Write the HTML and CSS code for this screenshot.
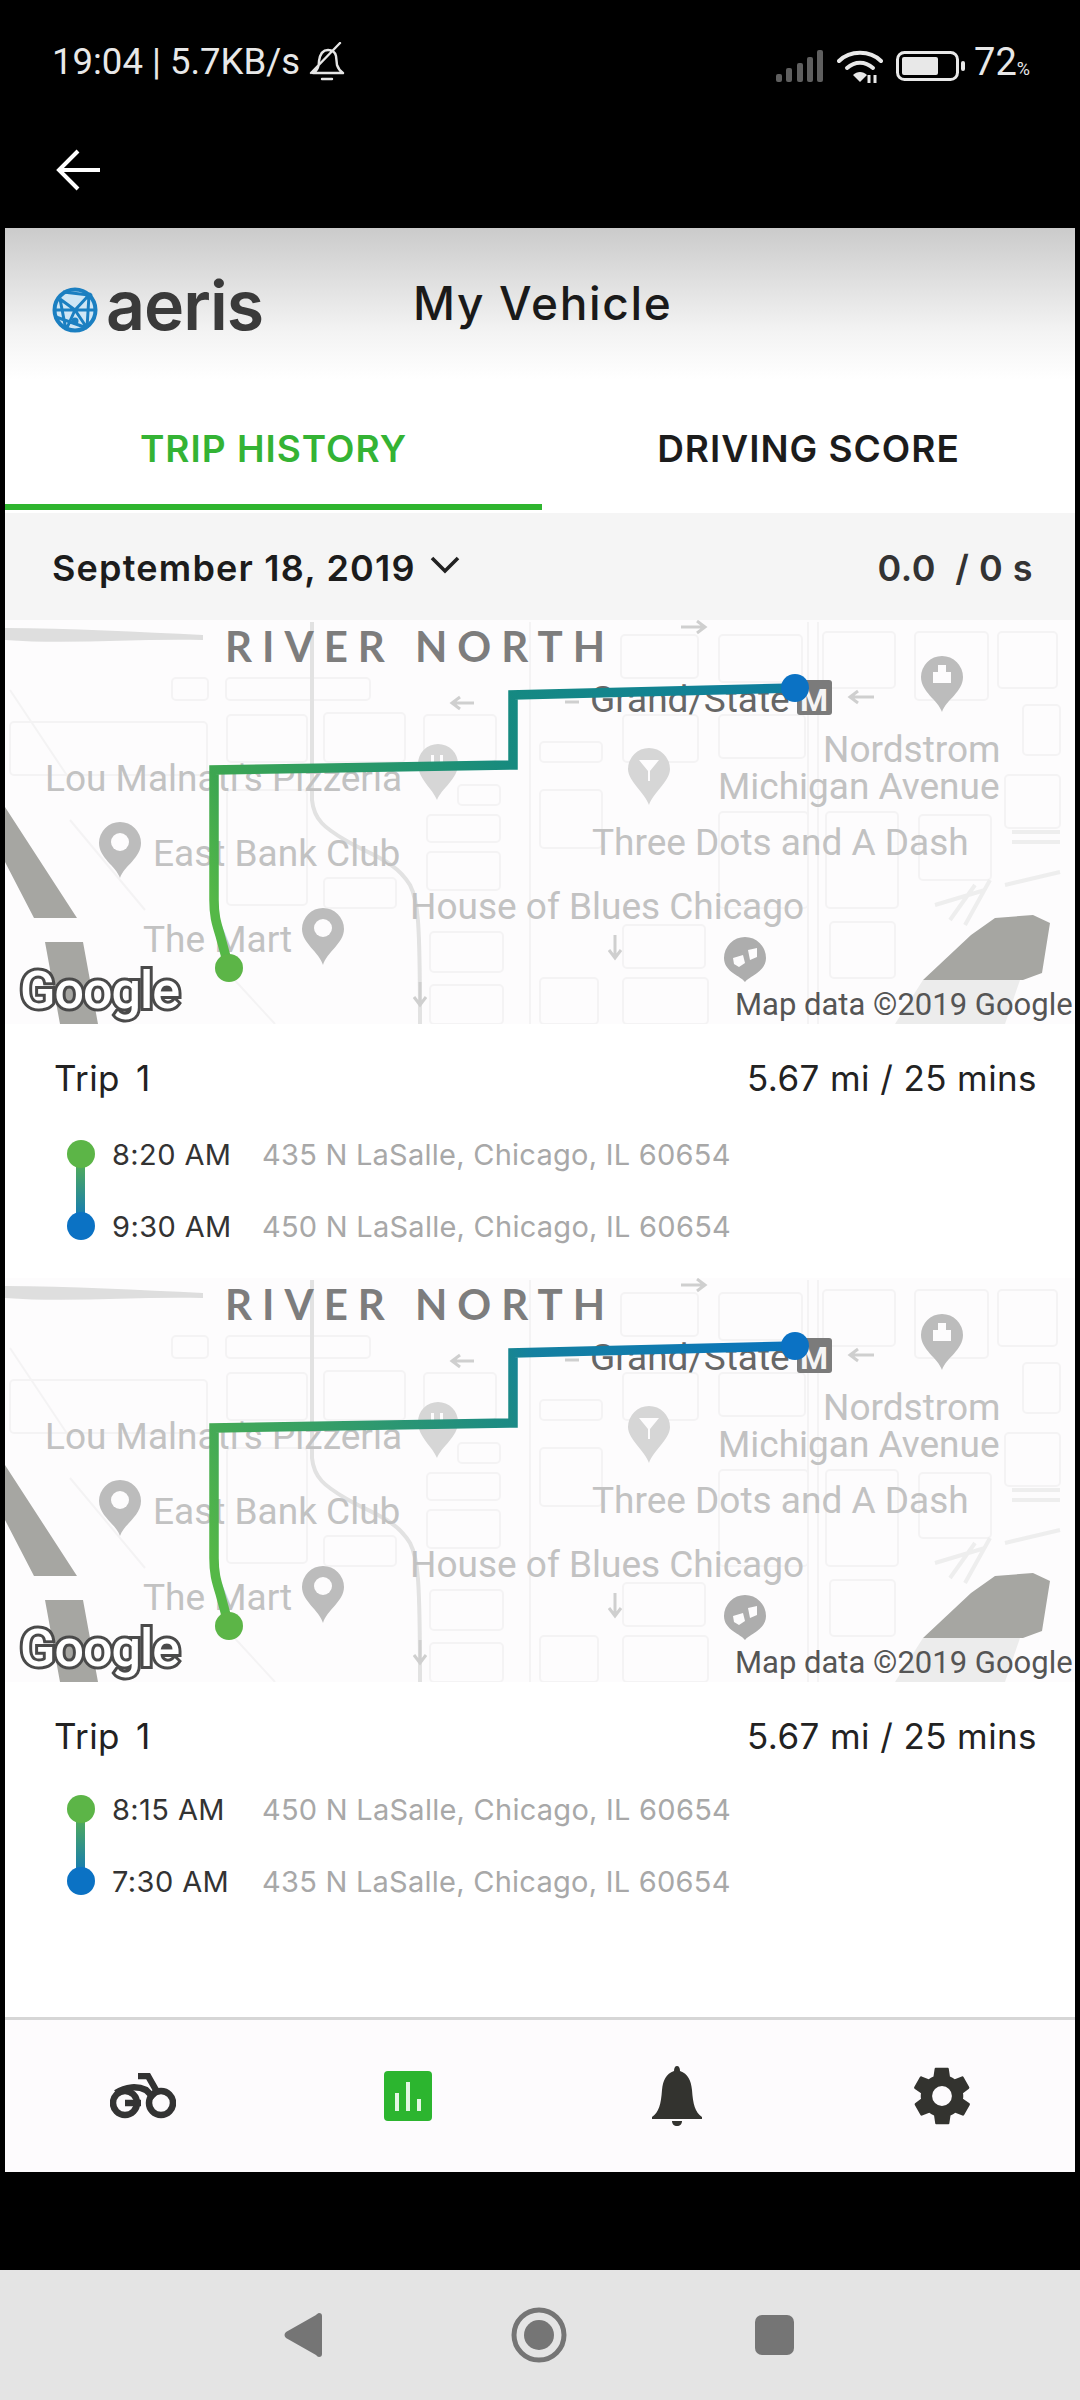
FILE: index.html
```html
<!DOCTYPE html>
<html lang="en">
<head>
<meta charset="utf-8">
<title>My Vehicle</title>
<link rel="stylesheet" href="styles.css">
</head>
<body>
<div class="screen">
  <div class="status">
    <div class="status-left">
      <span>19:04 | 5.7KB/s</span>
      <svg class="mute" viewBox="0 0 36 40"><path d="M6 30C9 27 10 24 10 19 11 12 14 8 19 8c4 0 7 2 8 6l1 9c1 3 3 6 6 8H4M2 31L31 1M13 37h10" fill="none" stroke="#e6e6e6" stroke-width="2.4" stroke-linecap="round" stroke-linejoin="round"/></svg>
    </div>
    <div class="status-right">
      <svg class="signal" viewBox="0 0 48 32"><g fill="#5f5f5f"><rect x="0" y="24" width="6" height="8" rx="2"/><rect x="10" y="18" width="6" height="14" rx="2"/><rect x="21" y="13" width="6" height="19" rx="2"/><rect x="31" y="7" width="6" height="25" rx="2"/><rect x="41" y="0" width="6" height="32" rx="2"/></g></svg>
      <svg class="wifi" viewBox="0 0 46 34"><g fill="none" stroke="#e8e8e8" stroke-width="4" stroke-linecap="round"><path d="M2 12C13 1 33 1 44 12"/><path d="M10 19c8-7 18-7 26 0"/></g><path d="M16 26c4-4 10-4 14 0l-7 7z" fill="#e8e8e8"/><path d="M32 26v8M38 26v8" stroke="#e8e8e8" stroke-width="3"/></svg>
      <svg class="battery" viewBox="0 0 70 30"><rect x="1.500" y="1.500" width="60" height="27" rx="7" fill="none" stroke="#e8e8e8" stroke-width="3"/><rect x="6" y="6" width="36" height="18" rx="2" fill="#e8e8e8"/><rect x="65" y="10" width="4" height="10" rx="2" fill="#e8e8e8"/></svg>
      <span class="pct">72<small>%</small></span>
    </div>
  </div>
  <div class="toolbar">
    <svg class="back" viewBox="0 0 44 44"><path d="M2 22h42M22 3L3 22l19 19" fill="none" stroke="#fff" stroke-width="4" stroke-linejoin="miter"/></svg>
  </div>

  <main class="app">
    <header class="app-header">
      <div class="logo">
        <svg class="globe" viewBox="0 0 46 46"><circle cx="23" cy="23" r="20.500" fill="#cfe6f5" stroke="#1b7fc1" stroke-width="4"/><g fill="none" stroke="#1b7fc1" stroke-width="3"><path d="M4 23h38M8 12l15 11 14-15M23 23l-9 20M23 23l12 18M8 12l6 31M37 8l-2 33M11 5l26 3M4 30l31 11"/></g><circle cx="23" cy="34" r="3.500" fill="#1b7fc1"/><circle cx="37" cy="9" r="3.500" fill="#1b7fc1"/></svg>
        <span class="logo-text">aeris</span>
      </div>
      <h1 class="title">My Vehicle</h1>
    </header>

    <nav class="tabs">
      <div class="tab tab-active">TRIP HISTORY</div>
      <div class="tab">DRIVING SCORE</div>
    </nav>

    <div class="date-bar">
      <div class="date">
        <span>September 18, 2019</span>
        <svg class="chev" viewBox="0 0 30 18"><path d="M2 2l13 13L28 2" fill="none" stroke="#222" stroke-width="3.600"/></svg>
      </div>
      <div class="score">0.0&nbsp; / 0 s</div>
    </div>

    <section class="trip">
      <svg class="map" viewBox="5 620 1070 404">
        <defs>
          <linearGradient id="route1" gradientUnits="userSpaceOnUse" x1="212" y1="900" x2="795" y2="688"><stop offset="0" stop-color="#55b847"/><stop offset="0.07" stop-color="#3da651"/><stop offset="0.53" stop-color="#168a7f"/><stop offset="1" stop-color="#0e7da0"/></linearGradient>
          <linearGradient id="route2" gradientUnits="userSpaceOnUse" x1="212" y1="900" x2="795" y2="688"><stop offset="0" stop-color="#55b847"/><stop offset="0.07" stop-color="#45aa55"/><stop offset="0.53" stop-color="#1b8a85"/><stop offset="0.6" stop-color="#1480a0"/><stop offset="1" stop-color="#0b74bd"/></linearGradient>
          <g id="base">
            <g class="block">
              <rect x="172" y="678" width="36" height="22" rx="4"/><rect x="226" y="678" width="144" height="22" rx="4"/><rect x="227" y="715" width="80" height="47" rx="4"/><rect x="324" y="713" width="81" height="49" rx="4"/><rect x="424" y="715" width="72" height="47" rx="4"/><rect x="10" y="722" width="197" height="53" rx="4"/><rect x="458" y="785" width="42" height="20" rx="4"/><rect x="427" y="815" width="73" height="27" rx="4"/><rect x="427" y="852" width="73" height="38" rx="4"/><rect x="227" y="790" width="80" height="115" rx="4"/><rect x="324" y="878" width="72" height="30" rx="4"/><rect x="430" y="932" width="73" height="40" rx="4"/><rect x="430" y="985" width="73" height="39" rx="4"/>
              <rect x="823" y="632" width="72" height="56" rx="4"/><rect x="915" y="632" width="73" height="68" rx="4"/><rect x="998" y="632" width="59" height="56" rx="4"/><rect x="719" y="635" width="83" height="47" rx="4"/><rect x="621" y="635" width="77" height="43" rx="4"/><rect x="719" y="715" width="86" height="43" rx="4"/><rect x="540" y="742" width="62" height="20" rx="4"/><rect x="540" y="790" width="62" height="58" rx="4"/><rect x="623" y="715" width="75" height="47" rx="4"/><rect x="826" y="812" width="72" height="96" rx="4"/><rect x="719" y="812" width="89" height="96" rx="4"/><rect x="919" y="815" width="72" height="65" rx="4"/><rect x="1005" y="775" width="55" height="53" rx="4"/><rect x="1023" y="705" width="37" height="50" rx="4"/><rect x="623" y="925" width="82" height="43" rx="4"/><rect x="623" y="978" width="85" height="46" rx="4"/><rect x="540" y="978" width="58" height="46" rx="4"/><rect x="830" y="922" width="65" height="56" rx="4"/>
            </g>
            <path class="block" d="M808 622V1024M818 622V1024M10 690L70 780M70 820L145 910M230 975L275 1024M530 622V1024"/>
            <path class="road-mid" d="M312 622V800C314 820 325 828 345 840C370 855 395 860 410 885C418 900 420 920 420 1024"/>
            <path class="road-top" d="M5 628C70 628 140 632 203 635L203 640C140 638 70 645 5 640z"/>
            <path class="road-light" d="M1012 832H1060M1012 842H1060M1005 885L1060 872M950 920L975 885M935 905L985 890M965 925L990 880"/>
            <path class="fade" d="M895 1024L923 980H1020L1005 1024z"/>
            <path class="water" d="M5 807L77 918H34L5 862zM45 942H83L98 1024H60zM923 980L971 935L995 918L1033 915L1050 923L1042 973L1023 980z"/>
            <g class="arrow"><path d="M452 703h22M460 697l-8 6 8 6M850 697h24M858 691l-8 6 8 6M681 627h24M697 621l8 6-8 6M565 702h14M420 982v23M414 997l6 8 6-8M615 935v23M609 950l6 8 6-8"/></g>
            <g class="pin pin-soft"><path d="M437 800c-4-11-19-21-19-36a20 20 0 0 1 40 0c0 15-17 25-21 36z"/><path class="pin-in" d="M431 755h3v14h-3zM440 755h3v14h-3z"/></g>
            <g class="pin pin-soft"><path d="M649 805c-4-12-21-24-21-36a21 21 0 0 1 42 0c0 12-17 24-21 36z"/><path class="pin-in" d="M639 760h20l-9 11v10h-2v-10z"/></g>
            <g class="pin"><path d="M942 712c-4-12-21-20-21-35a21 21 0 0 1 42 0c0 15-17 23-21 35z"/><path class="pin-in" d="M933 672h18v11h-18zM938 665h8v8h-8z"/></g>
            <g class="pin"><path d="M120 878c-4-12-21-20-21-35a21 21 0 0 1 42 0c0 15-17 23-21 35z"/><circle class="pin-in" cx="120" cy="842" r="9"/></g>
            <g class="pin"><path d="M323 965c-4-13-21-22-21-36a21 21 0 0 1 42 0c0 14-17 23-21 36z"/><circle class="pin-in" cx="323" cy="928" r="9"/></g>
            <g class="pin pin-dark"><path d="M745 982c-4-6-21-10-21-24a21 21 0 0 1 42 0c0 14-17 18-21 24z"/><path class="pin-in" d="M733 958l10-3 2 8-6 4-5-3zM748 950l9-2v9l-7 3z"/></g>
          </g>
        </defs>
        <use href="#base"/>
        <text class="m-area" x="225" y="662">RIVER NORTH</text>
        <text class="m-dark" x="590" y="712">Grand/State</text>
        <rect class="m-badge" x="797" y="680" width="35" height="35" rx="3"/>
        <text class="m-badge-t" x="814" y="711" text-anchor="middle">M</text>
        <text class="m-label"><tspan x="823" y="762">Nordstrom</tspan><tspan x="718" y="799">Michigan Avenue</tspan></text>
        <text class="m-label" x="45" y="791">Lou Malnati's Pizzeria</text>
        <text class="m-label" x="153" y="866">East Bank Club</text>
        <text class="m-label" x="592" y="855">Three Dots and A Dash</text>
        <text class="m-label" x="410" y="919">House of Blues Chicago</text>
        <text class="m-label" x="143" y="952">The Mart</text>
        <path class="route r-one" d="M229 968L220 935C216 922 214 915 214 900V770L513 765V695L795 688"/>
        <circle class="dot-g" cx="229" cy="968" r="14"/>
        <circle class="dot-b" cx="795" cy="688" r="14"/>
        <text class="m-google" x="20" y="1008">Google</text>
        <text class="m-credit" x="735" y="1015">Map data ©2019 Google</text>
      </svg>
      <div class="trip-info">
        <div class="trip-head"><span class="trip-name">Trip 1</span><span>5.67 mi / 25 mins</span></div>
        <div class="legs">
          <div class="rail"></div>
          <div class="leg"><span class="time">8:20 AM</span><span class="addr">435 N LaSalle, Chicago, IL 60654</span></div>
          <div class="leg"><span class="time">9:30 AM</span><span class="addr">450 N LaSalle, Chicago, IL 60654</span></div>
        </div>
      </div>
    </section>

    <section class="trip trip-second">
      <svg class="map" viewBox="5 620 1070 404">
        <use href="#base"/>
        <text class="m-area" x="225" y="662">RIVER NORTH</text>
        <text class="m-dark" x="590" y="712">Grand/State</text>
        <rect class="m-badge" x="797" y="680" width="35" height="35" rx="3"/>
        <text class="m-badge-t" x="814" y="711" text-anchor="middle">M</text>
        <text class="m-label"><tspan x="823" y="762">Nordstrom</tspan><tspan x="718" y="799">Michigan Avenue</tspan></text>
        <text class="m-label" x="45" y="791">Lou Malnati's Pizzeria</text>
        <text class="m-label" x="153" y="866">East Bank Club</text>
        <text class="m-label" x="592" y="855">Three Dots and A Dash</text>
        <text class="m-label" x="410" y="919">House of Blues Chicago</text>
        <text class="m-label" x="143" y="952">The Mart</text>
        <path class="route r-two" d="M229 968L220 935C216 922 214 915 214 900V770L513 765V695L795 688"/>
        <circle class="dot-g" cx="229" cy="968" r="14"/>
        <circle class="dot-b" cx="795" cy="688" r="14"/>
        <text class="m-google" x="20" y="1008">Google</text>
        <text class="m-credit" x="735" y="1015">Map data ©2019 Google</text>
      </svg>
      <div class="trip-info">
        <div class="trip-head"><span class="trip-name">Trip 1</span><span>5.67 mi / 25 mins</span></div>
        <div class="legs">
          <div class="rail"></div>
          <div class="leg"><span class="time">8:15 AM</span><span class="addr">450 N LaSalle, Chicago, IL 60654</span></div>
          <div class="leg"><span class="time">7:30 AM</span><span class="addr">435 N LaSalle, Chicago, IL 60654</span></div>
        </div>
      </div>
    </section>

    <nav class="bottom-nav">
      <div class="nav-item nav-item-left">
        <svg class="ico-bike" viewBox="0 0 66 46"><g fill="none" stroke="#333" stroke-width="6.500"><circle cx="15" cy="30" r="12"/><circle cx="51" cy="30" r="12"/><path d="M15 30h16M6 20c10-7 22-7 30-3l8 8M28 3h10l8 14"/></g></svg>
      </div>
      <div class="nav-item nav-item-left">
        <svg class="ico-chart" viewBox="0 0 48 50"><rect width="48" height="50" rx="4" fill="#2cb52f"/><g fill="#e4f7e4"><rect x="11" y="22" width="4" height="18"/><rect x="22" y="11" width="4" height="29"/><rect x="33" y="28" width="4" height="12"/></g></svg>
      </div>
      <div class="nav-item">
        <svg class="ico-bell" viewBox="0 0 52 60"><path d="M26 0c2 0 3 2 3 5 8 3 11 9 12 19 1 14 3 22 10 27v2H1v-2c7-5 9-13 10-27 1-10 4-16 12-19 0-3 1-5 3-5z" fill="#33332f"/><path d="M21 55h10c0 3-2 5-5 5s-5-2-5-5z" fill="#33332f"/></svg>
      </div>
      <div class="nav-item">
        <svg class="ico-gear" viewBox="0 0 24 24"><path d="M19.400 13c.1-.3.1-.6.1-1s0-.7-.1-1l2.100-1.600c.2-.2.2-.4.1-.6l-2-3.500c-.1-.2-.4-.3-.6-.2l-2.500 1c-.5-.4-1.100-.7-1.700-1l-.4-2.700c0-.2-.2-.4-.5-.4h-4c-.3 0-.5.2-.5.4l-.4 2.700c-.6.3-1.200.6-1.700 1l-2.500-1c-.2-.1-.5 0-.6.2l-2 3.500c-.1.2-.1.4.1.6L4.600 11c-.1.3-.1.700-.1 1s0 .7.1 1l-2.100 1.600c-.2.2-.2.4-.1.6l2 3.500c.1.2.4.3.6.2l2.500-1c.5.4 1.100.7 1.700 1l.4 2.700c0 .2.2.4.5.4h4c.3 0 .5-.2.5-.4l.4-2.700c.6-.3 1.200-.6 1.700-1l2.500 1c.2.1.5 0 .6-.2l2-3.500c.1-.2.1-.4-.1-.6L19.400 13zM12 15.500a3.500 3.500 0 1 1 0-7 3.500 3.500 0 0 1 0 7z" fill="#33332f"/></svg>
      </div>
    </nav>
  </main>

  <footer class="sysnav">
    <svg class="sys-back" viewBox="0 0 38 46"><path d="M35 1c2 0 3 1 3 3v38c0 2-1 3-3 3-1 0-2-1-3-2L2 26c-2-2-2-4 0-6L32 3c1-1 2-2 3-2z" fill="#757575"/></svg>
    <svg class="sys-home" viewBox="0 0 56 56"><circle cx="28" cy="28" r="25" fill="none" stroke="#757575" stroke-width="5"/><circle cx="28" cy="28" r="15" fill="#757575"/></svg>
    <div class="sys-recent"></div>
  </footer>
</div>
</body>
</html>
```
FILE: styles.css
```css
* { box-sizing: border-box; }
html, body { margin: 0; padding: 0; background: #000; }
.screen { width: 1080px; height: 2400px; display: flex; flex-direction: column; background: #000; font-family: "Inter", "Lato", sans-serif; overflow: hidden; }

.status { height: 122px; padding: 42px 50px 0 52px; display: flex; justify-content: space-between; align-items: flex-start; color: #e8e8e8; font-family: "Roboto", sans-serif; font-size: 36.500px; line-height: 40px; }
.status-left { display: flex; align-items: center; gap: 9px; }
.mute { width: 36px; height: 40px; }
.status-right { display: flex; align-items: center; gap: 13px; }
.signal { width: 48px; height: 32px; }
.wifi { width: 46px; height: 34px; }
.battery { width: 70px; height: 30px; margin-right: -5px; }
.pct { font-size: 38px; }
.pct small { font-size: 18px; }
.toolbar { height: 106px; padding: 26px 0 0 56px; }
.back { display: block; width: 44px; height: 44px; }

.app { margin: 0 5px; height: 1944px; background: #fff; display: flex; flex-direction: column; color: #1c1c1c; }
.app-header { height: 152px; flex: none; display: flex; align-items: flex-start; padding: 42px 0 0 47px; background: linear-gradient(#cbcbcb, #f3f3f3 68%, #fff); }
.logo { display: flex; align-items: center; gap: 8px; width: 361px; height: 70px; }
.globe { width: 46px; height: 46px; margin-top: 10px; }
.logo-text { font-size: 68px; font-weight: 600; line-height: 70px; color: #3a3a3a; letter-spacing: -1px; }
.title { margin: 0; font-size: 46px; line-height: 66px; font-weight: 500; letter-spacing: 1.700px; color: #1a1a1a; }

.tabs { height: 133px; flex: none; display: flex; }
.tab { flex: 1; display: flex; align-items: center; justify-content: center; font-size: 37px; font-weight: 600; letter-spacing: 1px; color: #1c1c1c; padding-top: 6px; border-bottom: 3px solid transparent; }
.tab-active { flex: 0 0 537px; color: #34b334; box-shadow: inset 0 -6px 0 #2fb52f; }

.date-bar { height: 107px; flex: none; background: #f5f5f5; display: flex; align-items: center; justify-content: space-between; padding: 2px 42px 0 47px; font-size: 36px; font-weight: 600; letter-spacing: 1.200px; }
.date { display: flex; align-items: center; gap: 14px; }
.chev { width: 30px; height: 18px; margin-bottom: 6px; }
.score { color: #333; letter-spacing: .5px; }

.trip { height: 658px; flex: none; }
.map { display: block; width: 1070px; height: 404px; background: #fdfcfd; }
.trip-info { height: 254px; padding: 0 38px 0 49px; }
.trip-head { display: flex; justify-content: space-between; height: 108px; padding-top: 32px; font-size: 35px; letter-spacing: .4px; line-height: 44px; color: #222; }
.trip-second .trip-head { height: 105px; }
.trip-name { word-spacing: 6px; }
.legs { position: relative; display: flex; flex-direction: column; gap: 28px; }
.leg { display: flex; height: 44px; align-items: center; font-size: 29px; }
.time { padding-left: 58px; box-sizing: content-box; width: 150px; color: #333; letter-spacing: .4px; }
.addr { color: #a8a8a8; letter-spacing: .25px; }
.rail { position: absolute; left: 22px; top: 22px; width: 9px; height: 72px; background: linear-gradient(#5cb547, #0b72c4); }
.rail::before, .rail::after { content: ""; position: absolute; left: -9px; width: 28px; height: 28px; border-radius: 50%; }
.rail::before { top: -14px; background: #5cb547; }
.rail::after { bottom: -14px; background: #0b72c4; }

.block { fill: none; stroke: #f4f3f4; stroke-width: 2; }
.road-mid { fill: none; stroke: #e2e2e2; stroke-width: 4; }
.road-light { fill: none; stroke: #eeeeee; stroke-width: 4; }
.road-top { fill: #dedede; }
.fade { fill: #ececec; }
.water { fill: #a6a6a2; }
.arrow { fill: none; stroke: #cfcfcf; stroke-width: 3; }
.pin { fill: #bcbcbc; }
.pin-soft { fill: #d6d6d6; }
.pin-dark { fill: #adadad; }
.pin-in { fill: #fdfcfd; }
.m-area { font-family: "Lato", sans-serif; font-size: 42px; font-weight: 700; letter-spacing: 10px; fill: #7d7d7d; }
.m-label { font-family: "Roboto", sans-serif; font-size: 37px; fill: #c2c2c2; }
.m-dark { font-family: "Roboto", sans-serif; font-size: 37px; fill: #666; }
.m-badge { fill: #7b7b7b; }
.m-badge-t { font-family: "Roboto", sans-serif; font-size: 32px; font-weight: 700; fill: #f5f5f5; }
.route { fill: none; stroke-width: 9.500; }
.r-one { stroke: url(#route1); }
.r-two { stroke: url(#route2); }
.dot-g { fill: #5cb547; }
.dot-b { fill: #0b72c4; }
.m-google { font-family: "Roboto", sans-serif; font-size: 52px; font-weight: 500; fill: #fff; stroke: #4a4a4a; stroke-width: 6px; paint-order: stroke; letter-spacing: -1px; }
.m-credit { font-family: "Roboto", sans-serif; font-size: 31px; fill: #555; }

.bottom-nav { margin-top: auto; height: 155px; flex: none; background: #fdfbfd; border-top: 3px solid #d6d6d6; display: grid; grid-template-columns: repeat(4, 1fr); padding-left: 8px; }
.nav-item { display: flex; align-items: center; justify-content: center; }
.nav-item-left { padding-right: 6px; }
.ico-bike { width: 66px; height: 46px; }
.ico-chart { width: 48px; height: 50px; }
.ico-bell { width: 52px; height: 60px; }
.ico-gear { width: 68px; height: 68px; }

.sysnav { margin-top: auto; height: 130px; background: #e4e4e4; display: flex; align-items: center; padding: 0 0 0 284px; }
.sys-back { width: 38px; height: 46px; }
.sys-home { width: 56px; height: 56px; margin-left: 189px; }
.sys-recent { width: 39px; height: 40px; margin-left: 188px; border-radius: 7px; background: #757575; }
```
